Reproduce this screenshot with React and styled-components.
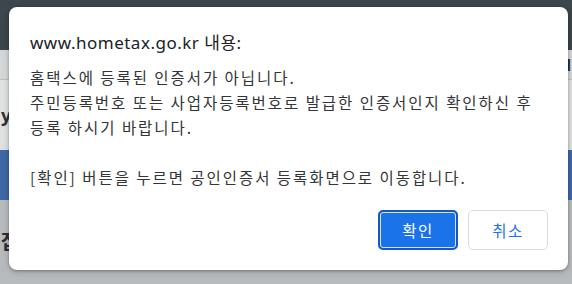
import React from 'react';
import styled, { createGlobalStyle } from 'styled-components';

const GlobalStyle = createGlobalStyle`
  html, body {
    margin: 0;
    padding: 0;
    width: 572px;
    height: 284px;
    overflow: hidden;
  }
  * {
    box-sizing: border-box;
  }
`;

const Page = styled.div`
  position: relative;
  width: 572px;
  height: 284px;
  display: flex;
  flex-direction: column;
  background: #b7bbbe;
  font-family: "Noto Sans", "Noto Sans CJK KR", sans-serif;
`;

const Band = styled.div`
  height: ${p => p.h}px;
  background: ${p => p.bg};
  border-bottom: ${p => (p.line ? '1px solid #bfc2c4' : 'none')};
  display: flex;
  align-items: center;
  justify-content: space-between;
  padding: 0 1px;
  overflow: hidden;
`;

const Stray = styled.span`
  font-size: ${p => p.size || 18}px;
  font-weight: 700;
  color: #2b2f33;
  line-height: 1;
`;

const Dialog = styled.div`
  position: absolute;
  left: 9px;
  top: 7px;
  width: 559px;
  height: 263px;
  background: #fff;
  border-radius: 8px;
  box-shadow: 0 1px 3px rgba(0, 0, 0, 0.3), 0 2px 8px rgba(0, 0, 0, 0.15);
  padding: 24px 20px 20px 21px;
  display: flex;
  flex-direction: column;
`;

const Title = styled.div`
  font-family: "Noto Sans", "Noto Sans CJK KR", sans-serif;
  font-size: 17px;
  letter-spacing: 0.5px;
  line-height: 23px;
  color: #202124;
`;

const Message = styled.div`
  margin-top: 11px;
  font-family: "Noto Sans CJK KR", sans-serif;
  font-size: 15.5px;
  letter-spacing: 1.95px;
  line-height: 25px;
  color: #333538;
  white-space: pre-wrap;
`;

const Actions = styled.div`
  margin-top: auto;
  display: flex;
  justify-content: flex-end;
  gap: 10px;
`;

const Button = styled.button`
  width: 80px;
  height: 40px;
  border-radius: 5px;
  font-family: "Noto Sans CJK KR", sans-serif;
  font-size: 15.5px;
  letter-spacing: 1.5px;
  cursor: pointer;
  border: ${p => (p.primary ? '2px solid #1558c0' : '1px solid #dadce0')};
  background: ${p => (p.primary ? '#1a73e8' : '#fff')};
  color: ${p => (p.primary ? '#fff' : '#1a73e8')};
  box-shadow: ${p => (p.primary ? 'inset 0 0 0 1px #d2e3fc' : 'none')};
`;

const message = `홈택스에 등록된 인증서가 아닙니다.
주민등록번호 또는 사업자등록번호로 발급한 인증서인지 확인하신 후
등록 하시기 바랍니다.

[확인] 버튼을 누르면 공인인증서 등록화면으로 이동합니다.`;

export default function App() {
  return (
    <>
      <GlobalStyle />
      <Page>
        <Band h={50} bg="#3b464d" />
        <Band h={30} bg="#d5d7d9" line>
          <span />
          <Stray size={16}>d</Stray>
        </Band>
        <Band h={70} bg="#dfe1e2">
          <Stray>yt</Stray>
        </Band>
        <Band h={50} bg="#3f69a6" />
        <Band h={84} bg="#b7bbbe">
          <Stray size={20}>잡</Stray>
        </Band>
        <Dialog>
          <Title>www.hometax.go.kr 내용:</Title>
          <Message>{message}</Message>
          <Actions>
            <Button primary>확인</Button>
            <Button>취소</Button>
          </Actions>
        </Dialog>
      </Page>
    </>
  );
}
